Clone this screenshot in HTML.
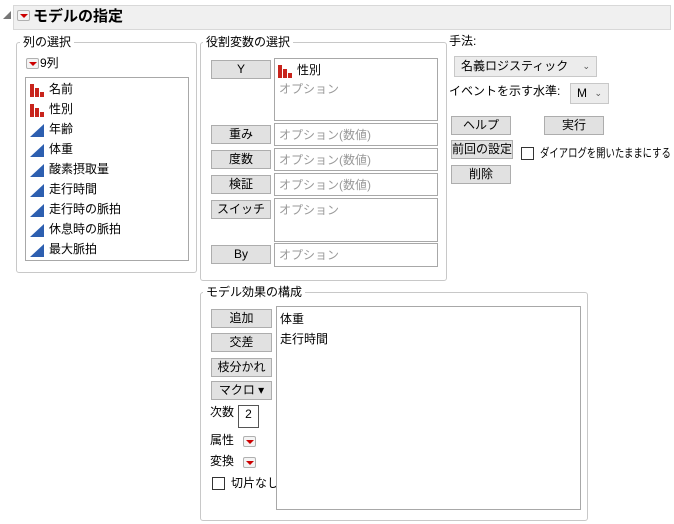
<!DOCTYPE html><html><head><meta charset="utf-8"><style>
*{box-sizing:border-box}
body{margin:0;width:674px;height:524px;background:#fff;font-family:"Liberation Sans","Noto Sans CJK JP",sans-serif;font-size:12px;color:#000;position:relative;overflow:hidden;white-space:nowrap}
.a{position:absolute}
.grp{position:absolute;border:1px solid #c8c8c8;border-radius:3px}
.lbl{position:absolute;background:#fff;padding:0 3px;line-height:14px;font-size:12px}
.btn{position:absolute;background:#e1e1e1;border:1px solid #adadad;text-align:center;line-height:16px;font-size:12px}
.box{position:absolute;border:1px solid #a8a8a8;background:#fff}
.ph{color:#999;position:absolute;left:4px;line-height:16px}
.red{position:absolute;width:13px;height:11px;border:1px solid #b0b0b0;border-radius:2px;background:#f4f4f4}
.red:after{content:"";position:absolute;left:2px;top:3px;border-left:4px solid transparent;border-right:4px solid transparent;border-top:4px solid #c00}
.it{position:absolute;left:4px;height:20px;line-height:20px}
.tri{display:inline-block;width:14px;height:14px;vertical-align:middle;margin-right:5px}
</style></head><body>
<div class="a" style="left:3px;top:11px;width:0;height:0;border-left:8px solid transparent;border-bottom:8px solid #777"></div>
<div class="a" style="left:13px;top:5px;width:658px;height:25px;background:#f0f0f0;border:1px solid #d8d8d8"></div>
<div class="red" style="left:17px;top:10px"></div>
<div class="a" style="left:33px;top:7px;font-size:15px;font-weight:bold;line-height:20px">モデルの指定</div>

<div class="grp" style="left:16px;top:42px;width:181px;height:231px"></div>
<div class="lbl" style="left:20px;top:35px">列の選択</div>
<div class="red" style="left:26px;top:58px"></div>
<div class="a" style="left:40px;top:55px;line-height:16px">9列</div>
<div class="box" style="left:25px;top:77px;width:164px;height:184px">
<div class="it" style="top:1px"><svg class="tri" viewBox="0 0 14 14"><path d="M0 1h4v13H0zM5 5h4v9H5zM10 9h4v5h-4z" fill="#c8241c"/></svg>名前</div>
<div class="it" style="top:21px"><svg class="tri" viewBox="0 0 14 14"><path d="M0 1h4v13H0zM5 5h4v9H5zM10 9h4v5h-4z" fill="#c8241c"/></svg>性別</div>
<div class="it" style="top:41px"><svg class="tri" viewBox="0 0 14 14"><path d="M0 14L14 1V14Z" fill="#2d5fb0"/></svg>年齢</div>
<div class="it" style="top:61px"><svg class="tri" viewBox="0 0 14 14"><path d="M0 14L14 1V14Z" fill="#2d5fb0"/></svg>体重</div>
<div class="it" style="top:81px"><svg class="tri" viewBox="0 0 14 14"><path d="M0 14L14 1V14Z" fill="#2d5fb0"/></svg>酸素摂取量</div>
<div class="it" style="top:101px"><svg class="tri" viewBox="0 0 14 14"><path d="M0 14L14 1V14Z" fill="#2d5fb0"/></svg>走行時間</div>
<div class="it" style="top:121px"><svg class="tri" viewBox="0 0 14 14"><path d="M0 14L14 1V14Z" fill="#2d5fb0"/></svg>走行時の脈拍</div>
<div class="it" style="top:141px"><svg class="tri" viewBox="0 0 14 14"><path d="M0 14L14 1V14Z" fill="#2d5fb0"/></svg>休息時の脈拍</div>
<div class="it" style="top:161px"><svg class="tri" viewBox="0 0 14 14"><path d="M0 14L14 1V14Z" fill="#2d5fb0"/></svg>最大脈拍</div>
</div>

<div class="grp" style="left:200px;top:42px;width:247px;height:239px"></div>
<div class="lbl" style="left:203px;top:35px">役割変数の選択</div>
<div class="btn" style="left:211px;top:60px;width:60px;height:19px">Y</div>
<div class="box" style="left:274px;top:58px;width:164px;height:63px">
<div class="it" style="top:1px;left:3px;line-height:20px"><svg class="tri" viewBox="0 0 14 14"><path d="M0 1h4v13H0zM5 5h4v9H5zM10 9h4v5h-4z" fill="#c8241c"/></svg>性別</div>
<div class="ph" style="top:22px">オプション</div></div>
<div class="btn" style="left:211px;top:125px;width:60px;height:19px">重み</div>
<div class="box" style="left:274px;top:123px;width:164px;height:23px"><div class="ph" style="top:3px">オプション(数値)</div></div>
<div class="btn" style="left:211px;top:150px;width:60px;height:19px">度数</div>
<div class="box" style="left:274px;top:148px;width:164px;height:23px"><div class="ph" style="top:3px">オプション(数値)</div></div>
<div class="btn" style="left:211px;top:175px;width:60px;height:19px">検証</div>
<div class="box" style="left:274px;top:173px;width:164px;height:23px"><div class="ph" style="top:3px">オプション(数値)</div></div>
<div class="btn" style="left:211px;top:200px;width:60px;height:19px">スイッチ</div>
<div class="box" style="left:274px;top:198px;width:164px;height:44px"><div class="ph" style="top:3px">オプション</div></div>
<div class="btn" style="left:211px;top:245px;width:60px;height:19px">By</div>
<div class="box" style="left:274px;top:243px;width:164px;height:24px"><div class="ph" style="top:3px">オプション</div></div>

<div class="a" style="left:449px;top:33px;line-height:16px">手法:</div>
<div class="a" style="left:454px;top:56px;width:143px;height:21px;background:#ececec;border:1px solid #c8c8c8;line-height:19px;padding-left:6px">名義ロジスティック<span style="position:absolute;right:6px;font-size:9px;color:#555">⌄</span></div>
<div class="a" style="left:449px;top:83px;line-height:16px">イベントを示す水準:</div>
<div class="a" style="left:570px;top:83px;width:39px;height:21px;background:#ececec;border:1px solid #c8c8c8;line-height:19px;padding-left:6px">M<span style="position:absolute;right:6px;font-size:9px;color:#555">⌄</span></div>
<div class="btn" style="left:451px;top:116px;width:60px;height:19px">ヘルプ</div>
<div class="btn" style="left:544px;top:116px;width:60px;height:19px">実行</div>
<div class="btn" style="left:451px;top:140px;width:62px;height:19px">前回の設定</div>
<div class="a" style="left:521px;top:147px;width:13px;height:13px;border:1px solid #333;background:#fff"></div>
<div class="a" style="left:540px;top:145px;line-height:16px;transform:scaleX(0.78);transform-origin:left center">ダイアログを開いたままにする</div>
<div class="btn" style="left:451px;top:165px;width:60px;height:19px">削除</div>

<div class="grp" style="left:200px;top:292px;width:388px;height:229px"></div>
<div class="lbl" style="left:203px;top:285px">モデル効果の構成</div>
<div class="btn" style="left:211px;top:309px;width:61px;height:19px">追加</div>
<div class="btn" style="left:211px;top:333px;width:61px;height:19px">交差</div>
<div class="btn" style="left:211px;top:358px;width:61px;height:19px">枝分かれ</div>
<div class="btn" style="left:211px;top:381px;width:61px;height:19px">マクロ ▾</div>
<div class="a" style="left:210px;top:404px;line-height:16px">次数</div>
<div class="a" style="left:238px;top:405px;width:21px;height:23px;border:1px solid #555;text-align:center;line-height:16px">2</div>
<div class="a" style="left:210px;top:432px;line-height:16px">属性</div>
<div class="red" style="left:243px;top:436px"></div>
<div class="a" style="left:210px;top:453px;line-height:16px">変換</div>
<div class="red" style="left:243px;top:457px"></div>
<div class="a" style="left:212px;top:477px;width:13px;height:13px;border:1px solid #333;background:#fff"></div>
<div class="a" style="left:231px;top:475px;line-height:16px">切片なし</div>
<div class="box" style="left:276px;top:306px;width:305px;height:204px">
<div class="a" style="left:3px;top:2px;line-height:20px">体重</div>
<div class="a" style="left:3px;top:22px;line-height:20px">走行時間</div>
</div>
</body></html>
